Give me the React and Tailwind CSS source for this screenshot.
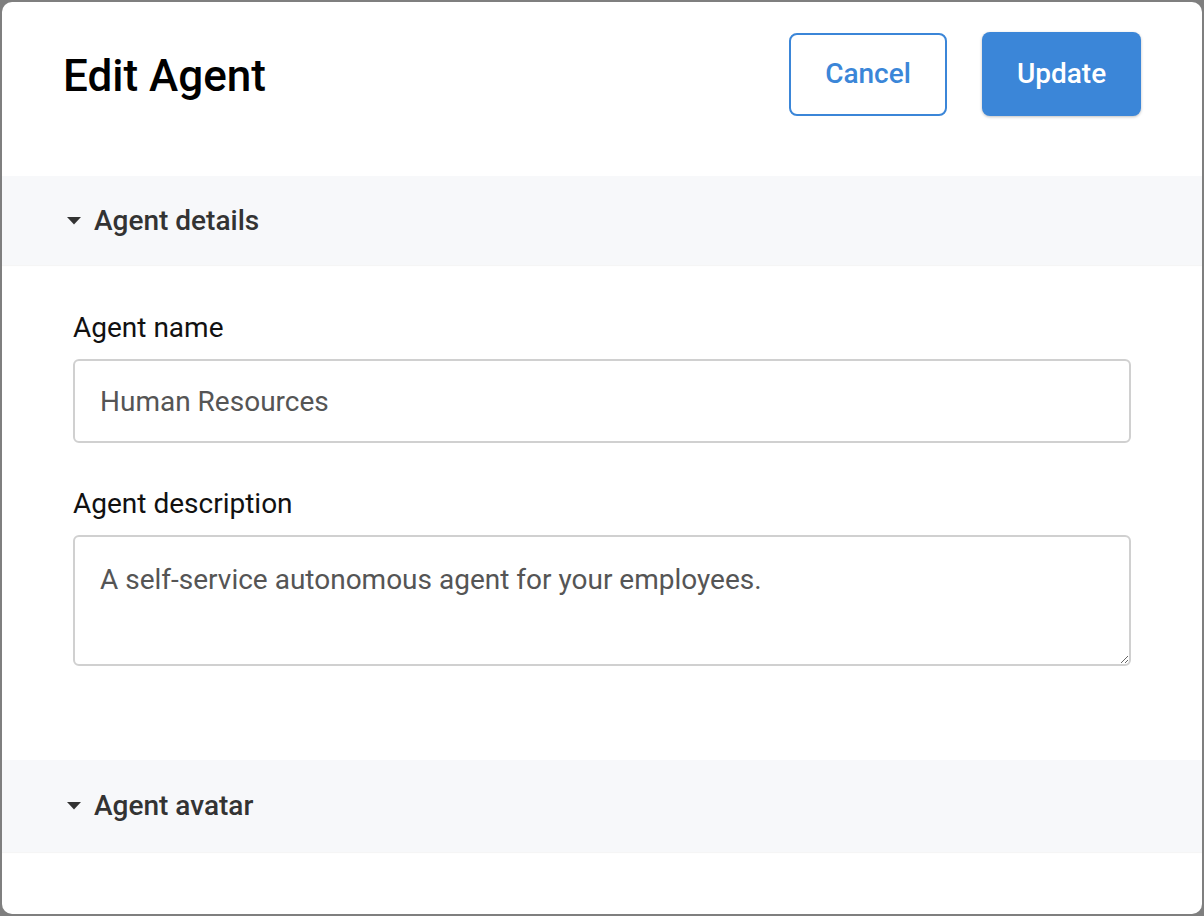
import React, { useState } from "react";

const Caret = () => (
  <svg width="14" height="8" viewBox="0 0 14 8" className="shrink-0">
    <path d="M0 0 L14 0 L7 7.5 Z" fill="#333333" />
  </svg>
);

const SectionHeader = ({ title, height }) => (
  <div
    className={`flex items-center gap-[13px] bg-[#f7f8fa] pl-[65px] shadow-[0_1px_1px_rgba(0,0,0,0.04)] ${height}`}
  >
    <Caret />
    <span className="text-[28px] font-medium text-[#333333]">{title}</span>
  </div>
);

export default function App() {
  const [name, setName] = useState("Human Resources");
  const [description, setDescription] = useState(
    "A self-service autonomous agent for your employees."
  );

  return (
    <div
      className="h-[916px] w-[1204px] bg-[#7f7f7f] p-[2px]"
      style={{ fontFamily: "Roboto, 'Liberation Sans', sans-serif" }}
    >
      <div className="flex h-full flex-col overflow-hidden rounded-[10px] bg-white">
        {/* Header */}
        <div className="flex h-[174px] items-start justify-between pl-[61px] pr-[61px] pt-[30px]">
          <div className="flex h-[88px] items-center">
            <h1 className="text-[44px] font-medium text-black">Edit Agent</h1>
          </div>
          <div className="flex items-center gap-[35px]">
            <button className="h-[83px] w-[158px] rounded-[8px] border-2 border-[#3b86d8] bg-white text-[28px] font-medium text-[#3b86d8]">
              Cancel
            </button>
            <button className="h-[84px] w-[159px] rounded-[8px] bg-[#3b86d8] text-[28px] font-medium text-white shadow-[0_1px_3px_rgba(0,0,0,0.25)]">
              Update
            </button>
          </div>
        </div>

        {/* Agent details */}
        <SectionHeader title="Agent details" height="h-[89px]" />

        <div className="flex flex-col px-[71px] pb-[94px] pt-[47px]">
          <label className="mb-[15px] text-[28px] leading-[32px] text-[#111111]">
            Agent name
          </label>
          <input
            value={name}
            onChange={(e) => setName(e.target.value)}
            className="h-[84px] w-full rounded-[6px] border-2 border-[#d0d0d0] px-[25px] text-[28px] text-[#555555] outline-none"
          />

          <label className="mb-[15px] mt-[45px] text-[28px] leading-[32px] text-[#111111]">
            Agent description
          </label>
          <textarea
            value={description}
            onChange={(e) => setDescription(e.target.value)}
            className="h-[131px] w-full rounded-[6px] border-2 border-[#d0d0d0] px-[25px] pt-[27px] text-[28px] leading-[32px] text-[#555555] outline-none"
          />
        </div>

        {/* Agent avatar */}
        <SectionHeader title="Agent avatar" height="h-[92px]" />

        <div className="flex-1" />
      </div>
    </div>
  );
}
